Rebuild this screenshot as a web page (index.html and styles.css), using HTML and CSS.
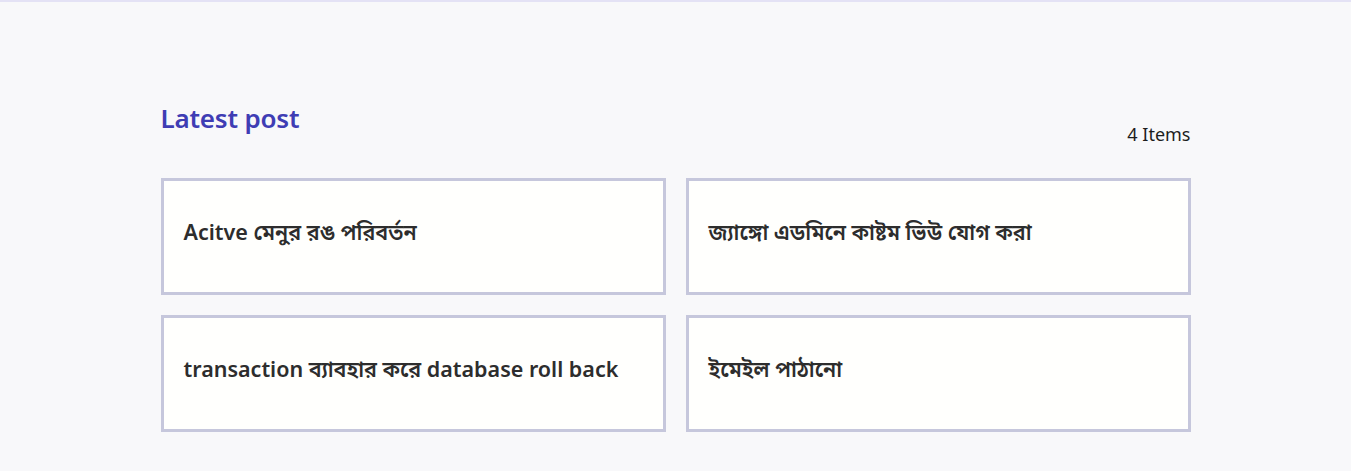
FILE: index.html
```html
<!DOCTYPE html>
<html lang="bn">
<head>
<meta charset="utf-8">
<title>Latest post</title>
<link rel="stylesheet" href="styles.css">
</head>
<body>
<div class="topline"></div>
<main class="container">
  <div class="head">
    <h2 class="title">Latest post</h2>
    <span class="count">4 Items</span>
  </div>
  <div class="grid">
    <a class="card" href="#">Acitve মেনুর রঙ পরিবর্তন</a>
    <a class="card" href="#">জ্যাঙ্গো এডমিনে কাষ্টম ভিউ যোগ করা</a>
    <a class="card" href="#">transaction ব্যাবহার করে database roll back</a>
    <a class="card" href="#">ইমেইল পাঠানো</a>
  </div>
</main>
</body>
</html>
```
FILE: styles.css
```css
html, body {
  margin: 0;
  padding: 0;
}
body {
  background: #f8f8fa;
  font-family: "Noto Sans", "Lato", "Noto Sans Bengali", sans-serif;
  color: #2b2b2b;
  height: 471px;
  overflow: hidden;
}
.topline {
  height: 2px;
  background: #e4e2f5;
}
.container {
  width: 1030px;
  margin: 0 auto;
  padding-top: 98px;
}
.head {
  display: flex;
  justify-content: space-between;
  align-items: flex-start;
  height: 78px;
}
.title {
  margin: 0;
  font-size: 26px;
  font-weight: 600;
  color: #3f3db4;
  line-height: 36px;
  letter-spacing: -0.2px;
}
.count {
  margin-top: 22px;
  font-size: 18px;
  line-height: 24px;
  color: #1d1d1d;
}
.grid {
  display: grid;
  grid-template-columns: 505px 505px;
  column-gap: 20px;
  row-gap: 20px;
}
.card {
  box-sizing: border-box;
  height: 117px;
  background: #fffffd;
  border: 3px solid #c6c7dc;
  padding: 36px 20px 0 20px;
  font-size: 21.5px;
  font-weight: 600;
  line-height: 30px;
  color: #2d2d2d;
  text-decoration: none;
  letter-spacing: 0;
}
```
